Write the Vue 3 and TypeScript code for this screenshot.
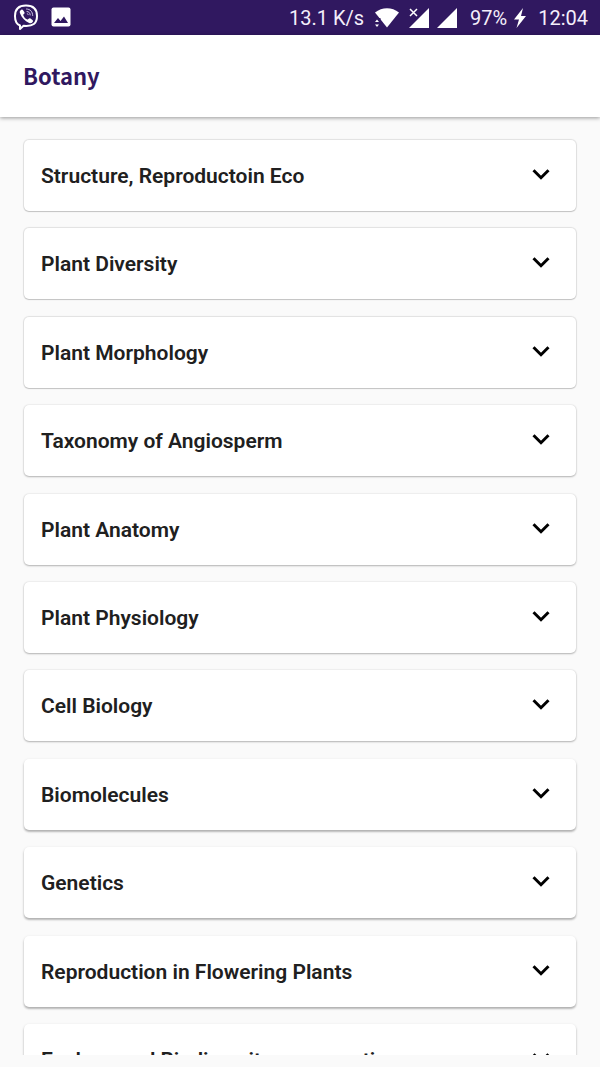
<script setup lang="ts">
import { ref } from 'vue'

interface Chapter {
  title: string
  level: 'low' | 'mid' | 'high'
}

const chapters: Chapter[] = [
  { title: 'Structure, Reproductoin Eco', level: 'low' },
  { title: 'Plant Diversity', level: 'low' },
  { title: 'Plant Morphology', level: 'low' },
  { title: 'Taxonomy of Angiosperm', level: 'mid' },
  { title: 'Plant Anatomy', level: 'mid' },
  { title: 'Plant Physiology', level: 'mid' },
  { title: 'Cell Biology', level: 'mid' },
  { title: 'Biomolecules', level: 'high' },
  { title: 'Genetics', level: 'high' },
  { title: 'Reproduction in Flowering Plants', level: 'high' },
  { title: 'Ecology and Biodiversity conservation', level: 'high' },
]

const selected = ref<number | null>(null)

function toggle(index: number): void {
  selected.value = selected.value === index ? null : index
}
</script>

<template>
  <div class="screen">
    <div class="status">
      <div class="notices">
        <svg width="26" height="26" viewBox="0 0 26 26" aria-label="Viber">
          <path
            d="M13 1.500C5.200 1.500 2 4.800 2 12c0 5 1.500 8.200 5 9.500V25l3.600-3.200c9.600.8 13.400-2.300 13.400-9.800C24 4.800 20.800 1.500 13 1.500Z"
            fill="none" stroke="#fff" stroke-width="2" stroke-linejoin="round" />
          <path
            d="M8.300 5.700c.8-.5 1.300-.2 1.800.5l1.300 2c.4.8.2 1.300-.6 1.900-.8.6-.7 1 .1 2.300.8 1.400 1.600 2.200 2.900 2.800.9.400 1.200.3 1.800-.4.6-.7 1.100-.8 1.900-.3l1.900 1.400c.8.6.8 1.200.2 2-1 1.400-2 1.700-3.500 1C11.700 16.900 8.900 13.900 7 9.300c-.6-1.600-.2-2.700 1.300-3.600Z"
            fill="#fff" />
          <path d="M13.500 5c3.800.2 6 2.400 6.200 6.500M14 7.500c2 .2 3.100 1.400 3.200 3.500M14.300 9.700c.6.100.8.400.9 1" fill="none"
            stroke="#cfc4e6" stroke-width="1" stroke-linecap="round" />
        </svg>
        <svg width="20" height="20" viewBox="0 0 20 20" aria-label="Picture">
          <rect x="0.500" y="0.500" width="19" height="19" rx="2" fill="#fff" />
          <path d="m3 16 4-5 2.500 3L13 9.500l4 6.500Z" fill="#301860" />
        </svg>
      </div>
      <div class="system">
        <span>13.1 K/s</span>
        <svg class="wifi" width="26" height="22" viewBox="0 0 26 22" aria-label="Wi-Fi">
          <path d="M1 5.500C8-.3 18-.3 25 5.500L13 20.500Z" fill="#fff" />
          <path d="M0 11h6.500v10H0Z" fill="#301860" />
          <path d="M1 15 3 12.500 5 15ZM1 17.500h4L3 20Z" fill="#fff" />
        </svg>
        <svg class="signal first" width="22" height="22" viewBox="0 0 22 22" aria-label="No signal">
          <path d="M21 1v20H1Z" fill="#fff" />
          <path d="M0 0h11v8l-4 4H0Z" fill="#301860" />
          <path d="m2 2 7 7M9 2 2 9" stroke="#fff" stroke-width="1.500" />
        </svg>
        <svg class="signal" width="22" height="22" viewBox="0 0 22 22" aria-label="Full signal">
          <path d="M21 1v20H1Z" fill="#fff" />
        </svg>
        <span class="battery">97%</span>
        <svg class="bolt" width="14" height="20" viewBox="0 0 14 20" aria-label="Charging">
          <path d="M10 0 1 11.500h5L3.500 20 13 8H8Z" fill="#fff" />
        </svg>
        <time>12:04</time>
      </div>
    </div>

    <header class="bar">
      <h1>Botany</h1>
    </header>

    <main class="viewport">
      <ul class="chapters">
        <li v-for="(chapter, index) in chapters" :key="chapter.title">
          <button type="button" class="card" :class="chapter.level" :aria-pressed="selected === index"
            @click="toggle(index)">
            <span>{{ chapter.title }}</span>
            <svg width="18" height="14" viewBox="0 0 18 14" aria-hidden="true">
              <path d="m1.500 1.300 7.500 7.400 7.500-7.400" fill="none" stroke="#000" stroke-width="3" />
            </svg>
          </button>
        </li>
      </ul>
    </main>
  </div>
</template>

<style>
body {
  background: #fafafa;
}
</style>

<style scoped>
.screen {
  display: flex;
  flex-direction: column;
  box-sizing: border-box;
  height: 100vh;
  padding-bottom: 12px;
  overflow: hidden;
  background: #fafafa;
  font-family: Roboto, "Liberation Sans", sans-serif;
}

.status {
  display: flex;
  flex: none;
  align-items: center;
  justify-content: space-between;
  height: 35px;
  padding: 0 12px 0 13px;
  background: #301860;
  color: #f4effb;
  font-size: 20px;
  line-height: 24px;
}

.notices,
.system {
  display: flex;
  align-items: center;
}

.notices {
  gap: 12px;
  padding-bottom: 2px;
}

.system {
  padding-top: 1px;
}

svg {
  display: block;
  flex: none;
}

.wifi {
  margin-left: 10px;
}

.signal {
  margin-left: 6px;
}

.first {
  margin-left: 8px;
}

.battery {
  margin-left: 12px;
}

.bolt {
  margin: 0 11px 0 6px;
}

.bar {
  position: relative;
  flex: none;
  padding: 25px 23px 27px;
  background: #fff;
  box-shadow: 0 1px 4px rgba(0, 0, 0, 0.4);
}

h1 {
  margin: 0;
  color: #301860;
  font-family: "Noto Sans CJK SC", "Noto Sans", sans-serif;
  font-size: 22px;
  font-weight: 700;
  line-height: 30px;
}

.viewport {
  flex: 1;
  min-height: 0;
  overflow: hidden;
}

/* The list runs past the viewport so that the last chapter peeks in. */
.chapters {
  display: flex;
  flex-direction: column;
  justify-content: space-between;
  gap: 16px;
  box-sizing: border-box;
  height: calc(100% + 40px);
  margin: 0;
  padding: 23px 24px 0;
  list-style: none;
}

.card {
  display: flex;
  align-items: center;
  justify-content: space-between;
  box-sizing: border-box;
  width: 100%;
  min-height: 71px;
  padding: 21px 26px 20px 17px;
  border: 0;
  border-radius: 5px;
  background: #fff;
  color: #202020;
  font: 600 21px/30px Roboto, "Liberation Sans", sans-serif;
  text-align: left;
}

.low {
  box-shadow: 0 0 1px 1px rgba(0, 0, 0, 0.1), 0 1px 1px rgba(0, 0, 0, 0.14);
}

.mid {
  box-shadow: 0 0 2px rgba(0, 0, 0, 0.14), 0 1px 2px rgba(0, 0, 0, 0.26);
}

.high {
  box-shadow: 0 1px 3px rgba(0, 0, 0, 0.16), 0 2px 2px rgba(0, 0, 0, 0.2);
}
</style>
